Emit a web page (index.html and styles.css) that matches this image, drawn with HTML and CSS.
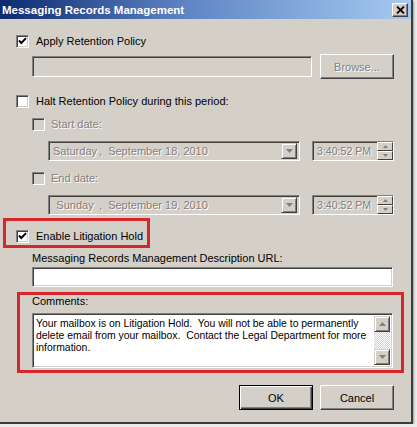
FILE: index.html
```html
<!DOCTYPE html>
<html lang="en">
<head>
  <meta charset="UTF-8">
  <title>Messaging Records Management</title>
  <link rel="stylesheet" href="styles.css">
</head>
<body>
  <div class="window">
    <div class="titlebar">
      <span class="title">Messaging Records Management</span>
      <span class="close">
        <svg width="9" height="8" viewBox="0 0 9 8"><path d="M1 0.5 L8 7.5 M8 0.5 L1 7.5" stroke="#000" stroke-width="1.8" fill="none"/></svg>
      </span>
    </div>

    <div class="content">
      <div class="check-row r-apply">
        <span class="cb"><svg width="9" height="9" viewBox="0 0 9 9"><path d="M1 3.5 L3.3 6 L8 1.2" stroke="#000" stroke-width="1.9" fill="none"/></svg></span>
        <span>Apply Retention Policy</span>
      </div>

      <div class="path-row">
        <span class="field disabled path"></span>
        <span class="btn browse"><span class="dis">Browse...</span></span>
      </div>

      <div class="check-row r-halt">
        <span class="cb"></span>
        <span>Halt Retention Policy during this period:</span>
      </div>

      <div class="check-row r-sub">
        <span class="cb off"></span>
        <span class="dis">Start date:</span>
      </div>
      <div class="date-row">
        <span class="field disabled combo">
          <span class="combo-text dis"><span class="day">Saturday</span>,  September 18, 2010</span>
          <span class="drop"><svg width="7" height="4" viewBox="0 0 7 4"><path d="M0 0 H7 L3.5 4 Z" fill="#808080"/></svg></span>
        </span>
        <span class="field disabled spin">
          <span class="spin-text dis">3:40:52 PM</span>
          <span class="spin-btns">
            <span class="spin-btn"><svg width="5" height="3" viewBox="0 0 5 3"><path d="M0 3 H5 L2.5 0 Z" fill="#808080"/></svg></span>
            <span class="spin-btn"><svg width="5" height="3" viewBox="0 0 5 3"><path d="M0 0 H5 L2.5 3 Z" fill="#808080"/></svg></span>
          </span>
        </span>
      </div>

      <div class="check-row r-sub r-end">
        <span class="cb off"></span>
        <span class="dis">End date:</span>
      </div>
      <div class="date-row">
        <span class="field disabled combo">
          <span class="combo-text dis"><span class="day">Sunday</span>,  September 19, 2010</span>
          <span class="drop"><svg width="7" height="4" viewBox="0 0 7 4"><path d="M0 0 H7 L3.5 4 Z" fill="#808080"/></svg></span>
        </span>
        <span class="field disabled spin">
          <span class="spin-text dis">3:40:52 PM</span>
          <span class="spin-btns">
            <span class="spin-btn"><svg width="5" height="3" viewBox="0 0 5 3"><path d="M0 3 H5 L2.5 0 Z" fill="#808080"/></svg></span>
            <span class="spin-btn"><svg width="5" height="3" viewBox="0 0 5 3"><path d="M0 0 H5 L2.5 3 Z" fill="#808080"/></svg></span>
          </span>
        </span>
      </div>

      <div class="hold-box">
        <div class="check-row">
          <span class="cb"><svg width="9" height="9" viewBox="0 0 9 9"><path d="M1 3.5 L3.3 6 L8 1.2" stroke="#000" stroke-width="1.9" fill="none"/></svg></span>
          <span>Enable Litigation Hold</span>
        </div>
      </div>

      <div class="url-label">Messaging Records Management Description URL:</div>
      <div class="field url"></div>

      <div class="comments-box">
        <div class="comments-label">Comments:</div>
        <div class="field textarea">
          <div class="ta-text">Your mailbox is on Litigation Hold.  You will not be able to permanently delete email from your mailbox.  Contact the Legal Department for more information.</div>
          <div class="scrollbar">
            <span class="sb-btn"><svg width="7" height="4" viewBox="0 0 7 4"><path d="M0 4 H7 L3.5 0 Z" fill="#808080"/></svg></span>
            <span class="sb-track"></span>
            <span class="sb-btn"><svg width="7" height="4" viewBox="0 0 7 4"><path d="M0 0 H7 L3.5 4 Z" fill="#808080"/></svg></span>
          </div>
        </div>
      </div>

      <div class="buttons">
        <span class="btn default">OK</span>
        <span class="btn">Cancel</span>
      </div>
    </div>
  </div>
</body>
</html>
```

FILE: styles.css
```css
html, body {
  margin: 0;
  padding: 0;
}
body {
  background: #ececec;
  font-family: 'Liberation Sans', Arial, sans-serif;
  font-size: 11px;
  color: #000;
}
.window {
  width: 411px;
  height: 422px;
  background: #d4d0c8;
  border-right: 2px solid #3c3c3c;
  border-bottom: 2px solid #3c3c3c;
  box-shadow: 1px 1px 2px rgba(0, 0, 0, 0.35);
  display: flex;
  flex-direction: column;
}
.titlebar {
  height: 19px;
  flex-shrink: 0;
  background: linear-gradient(to right, #0c2a70, #5f84c4 45%, #a6caf0);
  display: flex;
  align-items: center;
  justify-content: space-between;
  padding: 0 3px 0 2px;
}
.title {
  color: #fff;
  font-weight: bold;
  font-size: 11.5px;
}
.close {
  width: 16px;
  height: 14px;
  box-sizing: border-box;
  background: #d4d0c8;
  border: 1px solid;
  border-color: #fff #404040 #404040 #fff;
  box-shadow: inset -1px -1px #808080;
  display: flex;
  align-items: center;
  justify-content: center;
}

.content {
  display: flex;
  flex-direction: column;
  align-items: flex-start;
}
.dis {
  color: #808080;
  text-shadow: 1px 1px 0 #fff;
}

/* checkboxes */
.check-row {
  display: flex;
  align-items: center;
  height: 13px;
  line-height: 13px;
}
.cb {
  width: 13px;
  height: 13px;
  box-sizing: border-box;
  margin-right: 7px;
  background: #fff;
  border: 1px solid;
  border-color: #808080 #fff #fff #808080;
  box-shadow: inset 1px 1px #404040, inset -1px -1px #d4d0c8;
  display: flex;
  align-items: center;
  justify-content: center;
}
.cb.off {
  background: #d4d0c8;
  margin-right: 6px;
}
.r-apply {
  margin: 16px 0 0 16px;
}
.r-halt {
  margin: 16px 0 0 16px;
}
.r-sub {
  margin: 10px 0 0 32px;
}
.r-end {
  margin-top: 11px;
}

/* sunken fields */
.field {
  box-sizing: border-box;
  background: #fff;
  border: 1px solid;
  border-color: #808080 #fff #fff #808080;
  box-shadow: inset 1px 1px #404040, inset -1px -1px #d4d0c8;
}
.field.disabled {
  background: #d4d0c8;
}

/* raised buttons */
.btn {
  box-sizing: border-box;
  height: 25px;
  width: 74px;
  background: #d4d0c8;
  border: 1px solid;
  border-color: #fff #404040 #404040 #fff;
  box-shadow: inset -1px -1px #808080;
  display: flex;
  align-items: center;
  justify-content: center;
}
.btn.default {
  border-color: #000;
  box-shadow: inset 1px 1px #fff, inset -1px -1px #404040, inset -2px -2px #808080;
}

.path-row {
  margin: 6px 0 0 32px;
  display: flex;
  align-items: center;
  gap: 8px;
}
.path {
  width: 280px;
  height: 21px;
}

/* date pickers */
.date-row {
  margin: 10px 0 0 48px;
  display: flex;
  gap: 12px;
}
.combo {
  width: 252px;
  height: 20px;
  display: flex;
  align-items: center;
  padding: 2px;
}
.combo-text {
  flex: 1;
  white-space: pre;
}
.day {
  display: inline-block;
  width: 48px;
  text-align: center;
}
.drop {
  width: 16px;
  height: 16px;
  box-sizing: border-box;
  background: #d4d0c8;
  border: 1px solid;
  border-color: #d4d0c8 #404040 #404040 #d4d0c8;
  box-shadow: inset 1px 1px #fff, inset -1px -1px #808080;
  display: flex;
  align-items: center;
  justify-content: center;
}
.spin {
  width: 82px;
  height: 20px;
  display: flex;
  align-items: center;
  padding: 2px 0 2px 4px;
}
.spin-text {
  flex: 1;
  font-size: 10.6px;
  white-space: nowrap;
}
.spin-btns {
  width: 16px;
  height: 18px;
  display: flex;
  flex-direction: column;
}
.spin-btn {
  flex: 1;
  box-sizing: border-box;
  border: 1px solid;
  border-color: #fff #404040 #404040 #fff;
  display: flex;
  align-items: center;
  justify-content: center;
}

/* litigation hold */
.hold-box {
  margin: 3px 0 0 3px;
  width: 147px;
  height: 30px;
  box-sizing: border-box;
  border: 3px solid #d8262d;
  padding: 9px 0 0 10px;
}
.url-label {
  margin: 4px 0 0 32px;
  line-height: 13px;
}
.url {
  margin: 2px 0 0 32px;
  width: 361px;
  height: 20px;
}
.comments-box {
  margin: 5px 0 0 17px;
  width: 387px;
  box-sizing: border-box;
  border: 3px solid #d8262d;
  padding: 0 8px 2px 12px;
}
.comments-label {
  line-height: 13px;
}
.textarea {
  margin-top: 5px;
  width: 361px;
  height: 55px;
  display: flex;
  padding: 2px;
}
.ta-text {
  flex: 1;
  padding: 2px 2px 0 1px;
  font-size: 10.4px;
  line-height: 12px;
  white-space: pre-wrap;
}
.scrollbar {
  width: 16px;
  display: flex;
  flex-direction: column;
}
.sb-btn {
  height: 16px;
  box-sizing: border-box;
  background: #d4d0c8;
  border: 1px solid;
  border-color: #d4d0c8 #404040 #404040 #d4d0c8;
  box-shadow: inset 1px 1px #fff, inset -1px -1px #808080;
  display: flex;
  align-items: center;
  justify-content: center;
}
.sb-track {
  flex: 1;
  background: repeating-conic-gradient(#d4d0c8 0 25%, #fff 0 50%) 0 0 / 2px 2px;
}

.buttons {
  align-self: stretch;
  margin-top: 12px;
  display: flex;
  justify-content: flex-end;
  gap: 7px;
  padding-right: 17px;
}
```
